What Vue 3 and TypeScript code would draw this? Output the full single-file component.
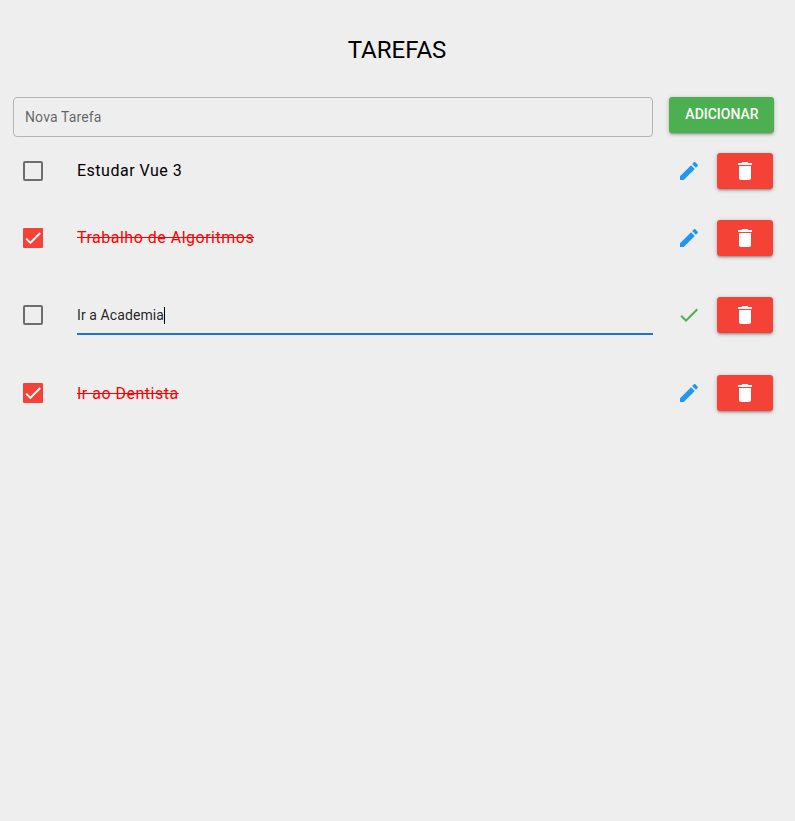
<script setup lang="ts">
import { ref } from 'vue'

interface Task {
  id: number
  title: string
  done: boolean
  editing: boolean
}

const tasks = ref<Task[]>([
  { id: 1, title: 'Estudar Vue 3', done: false, editing: false },
  { id: 2, title: 'Trabalho de Algoritmos', done: true, editing: false },
  { id: 3, title: 'Ir a Academia', done: false, editing: true },
  { id: 4, title: 'Ir ao Dentista', done: true, editing: false },
])

const newTask = ref('')
let nextId = 5

function addTask(): void {
  const title = newTask.value.trim()
  if (!title) return
  tasks.value.push({ id: nextId++, title, done: false, editing: false })
  newTask.value = ''
}

function removeTask(id: number): void {
  tasks.value = tasks.value.filter((t) => t.id !== id)
}
</script>

<template>
  <main class="page">
    <h1 class="title">TAREFAS</h1>
    <form class="new-task" @submit.prevent="addTask">
      <input v-model="newTask" class="field" type="text" placeholder="Nova Tarefa" />
      <button class="btn add" type="submit">ADICIONAR</button>
    </form>
    <ul class="list">
      <li v-for="task in tasks" :key="task.id" class="row" :class="{ editing: task.editing, done: task.done }">
        <button class="check" type="button" :aria-pressed="task.done" @click="task.done = !task.done">
          <svg v-if="task.done" viewBox="0 0 24 24">
            <path d="M1.73,12.91 8.1,19.28 22.79,4.59" fill="none" stroke="#fff" stroke-width="3" />
          </svg>
        </button>
        <div v-if="task.editing" class="edit"><span>{{ task.title }}</span><i class="caret"></i></div>
        <span v-else class="label"><span class="words">{{ task.title }}</span></span>
        <button class="action" type="button" @click="task.editing = !task.editing">
          <svg v-if="task.editing" class="ok" viewBox="0 0 24 24">
            <path d="M9 16.17L4.83 12l-1.42 1.41L9 19 21 7l-1.41-1.41z" />
          </svg>
          <svg v-else viewBox="0 0 24 24">
            <path d="M3 17.25V21h3.75L17.81 9.94l-3.75-3.75L3 17.25zM20.71 7.04c.39-.39.39-1.02 0-1.41l-2.34-2.34c-.39-.39-1.02-.39-1.41 0l-1.83 1.83 3.75 3.75 1.83-1.83z" />
          </svg>
        </button>
        <button class="btn remove" type="button" @click="removeTask(task.id)">
          <svg viewBox="0 0 24 24">
            <path d="M6 19c0 1.1.9 2 2 2h8c1.1 0 2-.9 2-2V7H6v12zM19 4h-3.5l-1-1h-5l-1 1H5v2h14V4z" />
          </svg>
        </button>
      </li>
    </ul>
  </main>
</template>

<style>
body {
  background: #eee;
}
</style>

<style scoped>
.page {
  box-sizing: border-box;
  min-height: 821px;
  padding: 34px 21px 0 13px;
  background: #eee;
  color: #000;
  font-family: Roboto, "Liberation Sans", sans-serif;
  font-size: 14px;
}
.title {
  margin: 0 -7px 0 0;
  height: 63px;
  text-align: center;
  font-size: 24px;
  line-height: 32px;
  font-weight: 400;
}
button {
  padding: 0;
  border: 0;
  background: none;
  font-family: inherit;
  cursor: pointer;
}
.new-task {
  display: flex;
  align-items: flex-start;
  gap: 16px;
}
.field {
  box-sizing: border-box;
  flex: 1;
  min-width: 0;
  height: 40px;
  padding: 0 11px;
  border: 1px solid #b4b4b4;
  border-radius: 4px;
  background: transparent;
  font: 400 14px/24px Roboto, "Liberation Sans", sans-serif;
  letter-spacing: 0.13px;
  outline: none;
}
.field::placeholder {
  color: rgba(0, 0, 0, 0.6);
  opacity: 1;
}
.btn {
  height: 36px;
  border-radius: 3px;
  color: #fff;
  box-shadow: 0 1px 5px rgba(0, 0, 0, 0.2), 0 2px 2px rgba(0, 0, 0, 0.14), 0 3px 1px -2px rgba(0, 0, 0, 0.12);
}
.add {
  width: 105px;
  padding: 0 0 2px 1px;
  background: #4caf50;
  font-size: 14px;
  font-weight: 500;
}
.list {
  margin: 0;
  padding: 0;
  list-style: none;
}
.row {
  box-sizing: border-box;
  display: flex;
  height: 67px;
  padding: 16px 1px 0 10px;
}
.row.editing {
  height: 88px;
  padding-top: 26px;
}
.check {
  box-sizing: border-box;
  flex: none;
  width: 20px;
  height: 20px;
  margin: 8px 34px 0 0;
  border: 2px solid #6d6d6d;
  border-radius: 2px;
}
.check svg {
  display: block;
  width: 16px;
  height: 16px;
}
.done .check {
  border-color: #f44336;
  border-radius: 1px;
  background: #f44336;
}
.label {
  flex: 1;
  height: 36px;
  line-height: 35px;
  font-size: 16px;
  letter-spacing: 0.5px;
}
.editing + .row .label {
  line-height: 37px;
}
.done .words {
  color: #f00;
  text-decoration: line-through;
}
.edit {
  box-sizing: border-box;
  display: flex;
  flex: 1;
  height: 38px;
  border-bottom: 2px solid #1976d2;
  color: rgba(0, 0, 0, 0.87);
  line-height: 36px;
  letter-spacing: 0.09px;
}
.caret {
  width: 1px;
  height: 17px;
  margin-top: 10px;
  background: #000;
}
.action {
  flex: none;
  width: 24px;
  height: 24px;
  margin: 6px 16px 0 24px;
}
.action svg,
.remove svg {
  display: block;
  width: 24px;
  height: 24px;
  fill: #2196f3;
}
.action .ok {
  fill: #4caf50;
}
.remove {
  flex: none;
  width: 56px;
  padding: 0 16px;
  background: #f44336;
}
.remove svg {
  fill: #fff;
}
</style>
